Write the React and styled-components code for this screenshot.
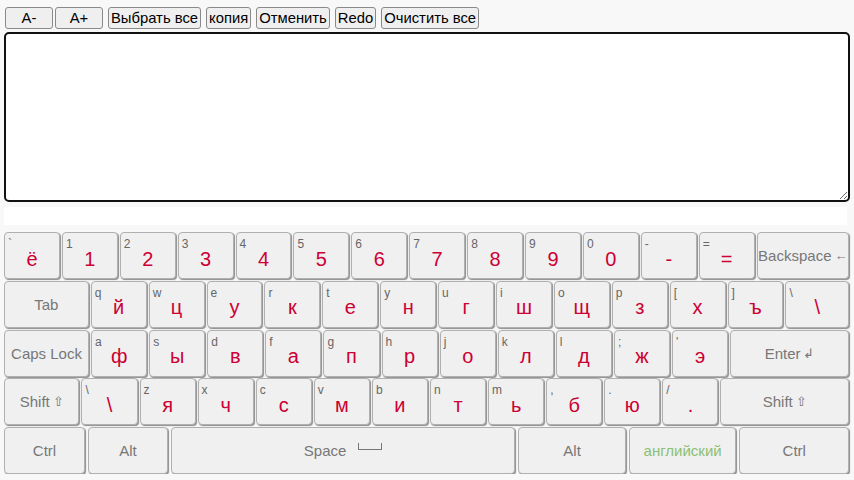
import React from "react";
import styled, { createGlobalStyle } from "styled-components";

const GlobalStyle = createGlobalStyle`
  body {
    margin: 0;
    background: #f8f8f8;
    font-family: "Liberation Sans", Arial, sans-serif;
  }
`;

const Page = styled.div`
  padding: 7px 4px 0;
`;

const Toolbar = styled.div`
  display: flex;
  padding-left: 1px;
  gap: 5px;
`;

const SizeGroup = styled.div`
  display: flex;
  gap: 2px;
`;

const ToolButton = styled.button`
  height: 22px;
  min-width: ${(p) => (p.$wide ? "48px" : "0")};
  padding: 0 ${(p) => (p.$wide ? "0" : "2px")};
  font-family: "Liberation Sans", Arial, sans-serif;
  font-size: 14.8px;
  color: #000;
  background: #efefef;
  border: 1px solid #8a8a8a;
  border-radius: 3px;
`;

const Editor = styled.textarea`
  display: block;
  box-sizing: border-box;
  width: 100%;
  height: 170px;
  margin-top: 3px;
  border: 2px solid #111;
  border-radius: 5px;
  background: #fff;
  font-family: "Liberation Sans", Arial, sans-serif;
  font-size: 16px;
`;

const Spacer = styled.div`
  height: 18px;
  margin-top: 5px;
  margin-right: 3px;
  background: #fff;
`;

const Keyboard = styled.div`
  display: flex;
  flex-direction: column;
  gap: 1.75px;
  padding-top: 7px;
  margin-right: 1px;
`;

const Row = styled.div`
  display: flex;
  gap: ${(p) => p.$gap || 2}px;
  height: 47px;
`;

const Key = styled.div`
  position: relative;
  flex: ${(p) => p.$w} 1 0;
  min-width: 0;
  box-sizing: border-box;
  display: flex;
  align-items: center;
  justify-content: center;
  background: #f0f0f0;
  border: 1px solid #b0b0b0;
  border-radius: 4px;
  box-shadow: 1px 1px 1px #8c8c8c;
  color: ${(p) => (p.$green ? "#8cbf72" : "#777")};
  font-size: 15px;
  white-space: nowrap;
  overflow: hidden;
`;

const Hint = styled.span`
  position: absolute;
  top: 4px;
  left: 3px;
  font-size: 12px;
  color: #666;
`;

const Main = styled.span`
  padding-top: 7px;
  font-size: 20px;
  color: #cc0033;
`;

const SpaceMark = styled.span`
  display: inline-block;
  width: 22px;
  height: 6px;
  margin-left: 12px;
  margin-top: -8px;
  border: 1px solid #777;
  border-top: none;
`;

const Glyph = styled.span`
  font-size: 13px;
  margin-left: 3px;
`;

const L = (hint, main) => ({ hint, main, w: 56 });

const rows = [
  {
    keys: [
      L("`", "ё"), L("1", "1"), L("2", "2"), L("3", "3"), L("4", "4"),
      L("5", "5"), L("6", "6"), L("7", "7"), L("8", "8"), L("9", "9"),
      L("0", "0"), L("-", "-"), L("=", "="),
      { label: "Backspace", glyph: "←", w: 94 },
    ],
  },
  {
    keys: [
      { label: "Tab", w: 86 },
      L("q", "й"), L("w", "ц"), L("e", "у"), L("r", "к"), L("t", "е"),
      L("y", "н"), L("u", "г"), L("i", "ш"), L("o", "щ"), L("p", "з"),
      L("[", "х"), L("]", "ъ"),
      { hint: "\\", main: "\\", w: 64 },
    ],
  },
  {
    keys: [
      { label: "Caps Lock", w: 86 },
      L("a", "ф"), L("s", "ы"), L("d", "в"), L("f", "а"), L("g", "п"),
      L("h", "р"), L("j", "о"), L("k", "л"), L("l", "д"), L(";", "ж"),
      L("'", "э"),
      { label: "Enter", glyph: "↲", w: 121 },
    ],
  },
  {
    keys: [
      { label: "Shift", glyph: "⇧", w: 76 },
      L("\\", "\\"), L("z", "я"), L("x", "ч"), L("c", "с"), L("v", "м"),
      L("b", "и"), L("n", "т"), L("m", "ь"), L(",", "б"), L(".", "ю"),
      L("/", "."),
      { label: "Shift", glyph: "⇧", w: 131 },
    ],
  },
  {
    gap: 3,
    keys: [
      { label: "Ctrl", w: 80 },
      { label: "Alt", w: 79 },
      { label: "Space", space: true, w: 347 },
      { label: "Alt", w: 107 },
      { label: "английский", green: true, w: 107 },
      { label: "Ctrl", w: 109 },
    ],
  },
];

const App = () => (
  <Page>
    <GlobalStyle />
    <Toolbar>
      <SizeGroup>
        <ToolButton $wide>A-</ToolButton>
        <ToolButton $wide>A+</ToolButton>
      </SizeGroup>
      <ToolButton>Выбрать все</ToolButton>
      <ToolButton>копия</ToolButton>
      <ToolButton>Отменить</ToolButton>
      <ToolButton>Redo</ToolButton>
      <ToolButton>Очистить все</ToolButton>
    </Toolbar>
    <Editor />
    <Spacer />
    <Keyboard>
      {rows.map((row, i) => (
        <Row key={i} $gap={row.gap}>
          {row.keys.map((k, j) => (
            <Key key={j} $w={k.w} $green={k.green}>
              {k.hint && <Hint>{k.hint}</Hint>}
              {k.main && <Main>{k.main}</Main>}
              {k.label}
              {k.glyph && <Glyph>{k.glyph}</Glyph>}
              {k.space && <SpaceMark />}
            </Key>
          ))}
        </Row>
      ))}
    </Keyboard>
  </Page>
);

export default App;
